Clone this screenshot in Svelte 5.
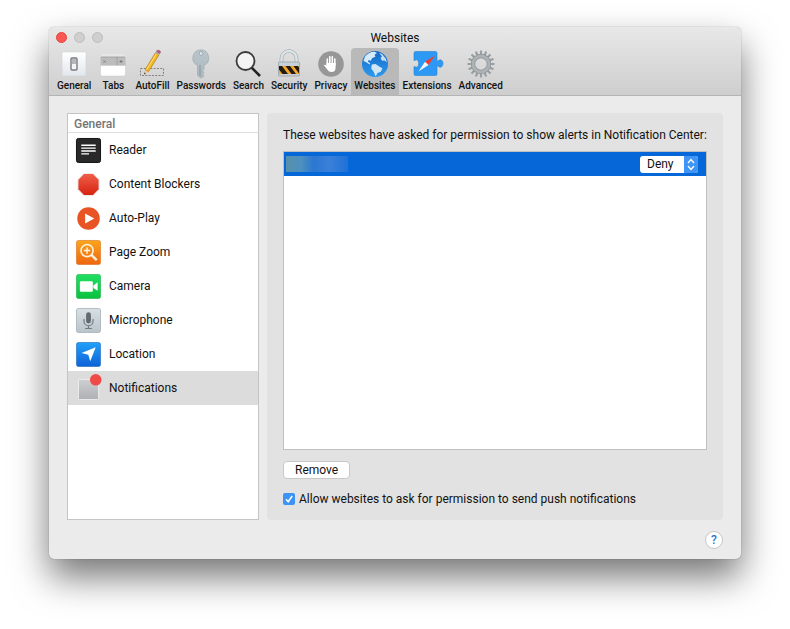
<script lang="ts">
	interface Site {
		id: number;
		permission: string;
	}

	const tabs = [
		'General',
		'Tabs',
		'AutoFill',
		'Passwords',
		'Search',
		'Security',
		'Privacy',
		'Websites',
		'Extensions',
		'Advanced'
	];

	const categories = [
		'Reader',
		'Content Blockers',
		'Auto-Play',
		'Page Zoom',
		'Camera',
		'Microphone',
		'Location',
		'Notifications'
	];

	const gearTeeth = Array.from({ length: 16 }, (_, i) => i * 22.5);

	let activeTab = $state('Websites');
	let activeCategory = $state('Notifications');
	let sites: Site[] = $state([{ id: 1, permission: 'Deny' }]);
	let selectedSite = $state(1);
	let allowPush = $state(true);

	function removeSite() {
		sites = sites.filter((site) => site.id !== selectedSite);
	}
</script>

{#snippet tabIcon(name: string)}
	<svg class="tab-icon" viewBox="0 0 30 30" aria-hidden="true">
		{#if name === 'General'}
			<rect x="3" y="3" width="24" height="24" rx="1" fill="url(#plate)" stroke="#d2d5d8" stroke-width=".6" />
			<rect x="12" y="9" width="6" height="12" rx="1" fill="#f4f4f4" stroke="#777b80" stroke-width="1.4" />
			<rect x="13" y="10" width="4" height="5" fill="#b5b8bb" />
		{:else if name === 'Tabs'}
			<rect x="3" y="5" width="24" height="22" rx="2" fill="#e6e6e6" />
			<rect x="2.5" y="8" width="25" height="9" fill="#bcbcbc" />
			<path d="M19 8v9M3 8h24" stroke="#999" stroke-width=".8" />
			<path d="M5.500 11.500l2 2M7.500 11.500l-2 2M21.500 12.500h3M23 11v3" stroke="#777" stroke-width="1" />
			<path d="M2.500 16.500h25V25q0 2-2 2h-21q-2 0-2-2z" fill="#fff" stroke="#c9c9c9" stroke-width=".5" />
		{:else if name === 'AutoFill'}
			<rect x="3.500" y="19.500" width="23" height="7" fill="none" stroke="#777" stroke-width=".9" stroke-dasharray="2 1.300" />
			<path d="M7 25.500l1.200-5 3.300 2z" fill="#eac79a" />
			<path d="M7 25.500l.5-2 1.300.8z" fill="#222" />
			<path d="M8.200 20.500L18.500 3.700l3.500 2.200-10.500 16.600z" fill="#f6b820" stroke="#a86b10" stroke-width=".6" />
			<path d="M9.500 20.800L19.600 4.500" stroke="#ffe36b" stroke-width="1" />
			<path d="M18.500 3.700l.9-1.500 3.500 2.200-.9 1.500z" fill="#aaa" />
			<path d="M19.400 2.200q1-1.700 3-.6t.5 2.800z" fill="#bd5d7c" stroke="#874158" stroke-width=".5" />
		{:else if name === 'Passwords'}
			<path
				d="M15 .8a8.200 8.200 0 0 0-3.500 15.600V26l2.500 2.700h2l2-2-1.500-1.700 1.500-1.500-1.500-1.700 1.500-1.600v-3.800A8.200 8.200 0 0 0 15 .8z"
				fill="url(#steel)"
				stroke="#98a5aa"
				stroke-width=".6"
			/>
			<circle cx="15" cy="4.500" r="1.800" fill="#e8eaeb" stroke="#7f8b90" stroke-width=".6" />
			<path d="M14 16v11" stroke="#84939a" stroke-width=".9" />
		{:else if name === 'Search'}
			<path d="M18.500 18.500l8.500 8.500" stroke="#222" stroke-width="2.600" />
			<circle cx="12.500" cy="12" r="9" fill="#f4f4f4" stroke="#3b3b3b" stroke-width="1.800" />
		{:else if name === 'Security'}
			<path d="M7.500 16V9.500a7.500 7.500 0 0 1 15 0V16" fill="none" stroke="#9ba5aa" stroke-width="3.600" />
			<path d="M7.500 16V9.500a7.500 7.500 0 0 1 15 0V16" fill="none" stroke="#dde4e7" stroke-width="2.400" />
			<rect x="4.500" y="13" width="21" height="14" rx="1" fill="#c6d2d9" stroke="#8a9296" stroke-width=".6" />
			<rect x="5" y="17" width="20" height="8" fill="#f3a62c" />
			<path d="M5 17h3l6 8H8.500L5 20.500zM11.500 17H16l6 8h-4.500zM19.500 17H24l1 1.500V24.500z" fill="#231b12" />
		{:else if name === 'Privacy'}
			<circle cx="15" cy="15" r="12.800" fill="#979797" />
			<path
				d="M11.300 16V10M13.800 14V7.800M16.300 14V7.800M18.800 16V10"
				stroke="#fff"
				stroke-width="1.600"
				stroke-linecap="round"
			/>
			<path d="M10.500 14h9.100v4.500q0 4.500-4 4.500-3 0-4.300-2.600L7.900 16.300q.7-1.500 2.600.5z" fill="#fff" />
		{:else if name === 'Websites'}
			<circle cx="15" cy="15" r="13" fill="url(#ocean)" />
			<path
				d="M5 7.500Q9 2.700 14.500 2.800l2.500 1.300-2.500 1.700 1 1.700-3.500 1.800-1.200 2.500-2.300-.8-.6 1.800 2.100 1.200-.3 1.500-3.500-2.200L3.500 12z"
				fill="#d6eafa"
			/>
			<path d="M11.800 15.500l3.700-.5 4.500 3 2.500 1.200-1.700 3.500-3.300 1.300-1.800 3.500-2-4.500-2.500-3.500z" fill="#cfe6f8" />
			<path d="M19 4l3 1 3.700 4.500 1.200 4-2.500-2-2.400.2-1.500-2.700 1.500-1.800z" fill="#c2dff6" />
		{:else if name === 'Extensions'}
			<path
				d="M4.500 2.500h20q1.500 0 1.500 1.500v8.200q1 0 1.500-.7 1.500-1.500 3.200-.2 1.300 1.200 1.300 3.200t-1.300 3.200q-1.700 1.300-3.200-.2-.5-.7-1.500-.7V25q0 1.500-1.500 1.500h-20Q3 26.500 3 25v-7.500q1 0 1.500.5 1.300.6 2.300-.4.900-1.300.9-3.100t-.9-3.100q-1-1-2.300-.4-.5.500-1.500.5V4q0-1.500 1.500-1.500z"
				fill="#2d99f4"
				stroke="#2581d0"
				stroke-width=".6"
				transform="translate(-1)"
			/>
			<path d="M23 6.500L16.500 16 13 12.800z" fill="#ef3d32" />
			<path d="M6.500 22.500L13 12.800l3.500 3.200z" fill="#f5f7fa" />
		{:else}
			{#each gearTeeth as angle}
				<rect x="13.900" y="1.500" width="2.200" height="5" rx=".5" fill="#989ea1" transform="rotate({angle} 15 15)" />
			{/each}
			<circle cx="15" cy="15" r="8" fill="none" stroke="#8b9195" stroke-width="4.400" />
			<circle cx="15" cy="15" r="8" fill="none" stroke="#adb2b5" stroke-width="3" />
		{/if}
	</svg>
{/snippet}

{#snippet categoryIcon(name: string)}
	<svg class="category-icon" viewBox="0 0 26 26" aria-hidden="true">
		{#if name === 'Reader'}
			<rect x=".5" y=".5" width="25" height="25" rx="2" fill="#292929" stroke="#111" />
			<path d="M5.500 7.500h15M5.500 10.500h15M5.500 13.500h15M5.500 16.500h8" stroke="#fff" stroke-width="1.500" />
		{:else if name === 'Content Blockers'}
			<path d="M8.300 1.500h9.400L24 8v10l-6.300 6.500H8.300L2 18V8z" fill="url(#stop)" stroke="#eee" stroke-width="1" />
		{:else if name === 'Auto-Play'}
			<circle cx="13" cy="13" r="11.700" fill="#e95425" />
			<path d="M9.500 7.800L19 13l-9.500 5.200z" fill="#fff" />
		{:else if name === 'Page Zoom'}
			<rect x=".5" y=".5" width="25" height="25" rx="2" fill="url(#amber)" stroke="#d86c13" stroke-width=".6" />
			<circle cx="11.500" cy="11" r="6.300" fill="none" stroke="#fff3df" stroke-width="1.700" />
			<path d="M11.500 7.700v6.600M8.200 11h6.600" stroke="#fff3df" stroke-width="1.500" />
			<path d="M16 15.500l5.500 5.500" stroke="#fff3df" stroke-width="2.500" />
		{:else if name === 'Camera'}
			<rect x=".5" y=".5" width="25" height="25" rx="2" fill="url(#green)" stroke="#13ad42" stroke-width=".6" />
			<rect x="4" y="7.500" width="13.500" height="11" rx="1.300" fill="#fff" />
			<path d="M18 12l4.500-3.500v9L18 14.500z" fill="#fff" />
		{:else if name === 'Microphone'}
			<rect x=".5" y=".5" width="25" height="25" rx="2" fill="url(#silver)" stroke="#a4aeb3" stroke-width=".8" />
			<rect x="10.500" y="4.500" width="5" height="11.500" rx="2.500" fill="#626a70" />
			<path d="M8.300 11.500v2.300a4.700 4.700 0 0 0 9.400 0v-2.300M13 18.500V21M9.500 21.300h7" fill="none" stroke="#70787d" stroke-width="1.200" />
		{:else if name === 'Location'}
			<rect x=".5" y=".5" width="25" height="25" rx="2" fill="url(#azure)" stroke="#1765b9" stroke-width=".6" />
			<path d="M20.500 5.500L14.800 20l-2-6.800-7-1.700z" fill="#fff" />
		{:else}
			<rect x="2.500" y="3.500" width="21" height="21" rx="1" fill="url(#grey)" stroke="#eee" />
			<circle cx="20.500" cy="4" r="6" fill="#f04a47" />
		{/if}
	</svg>
{/snippet}

<svg class="gradients" aria-hidden="true">
	<defs>
		<linearGradient id="plate" x2="0" y2="1"><stop stop-color="#fff" /><stop offset="1" stop-color="#e2e7ec" /></linearGradient>
		<linearGradient id="steel" x2="0" y2="1"><stop stop-color="#b9c7cd" /><stop offset="1" stop-color="#abb8bd" /></linearGradient>
		<linearGradient id="ocean" x2="0" y2="1"><stop stop-color="#1568c4" /><stop offset="1" stop-color="#2c9af0" /></linearGradient>
		<linearGradient id="stop" x2="0" y2="1"><stop stop-color="#f0604b" /><stop offset="1" stop-color="#d5220f" /></linearGradient>
		<linearGradient id="amber" x2="0" y2="1"><stop stop-color="#faa61b" /><stop offset="1" stop-color="#ef6511" /></linearGradient>
		<linearGradient id="green" x2="0" y2="1"><stop stop-color="#20df62" /><stop offset="1" stop-color="#0bc13e" /></linearGradient>
		<linearGradient id="silver" x2="0" y2="1"><stop stop-color="#d8e0e4" /><stop offset="1" stop-color="#b9c4ca" /></linearGradient>
		<linearGradient id="azure" x2="0" y2="1"><stop stop-color="#21a0f7" /><stop offset="1" stop-color="#0f62d8" /></linearGradient>
		<linearGradient id="grey" x2="0" y2="1"><stop stop-color="#cecfd1" /><stop offset="1" stop-color="#aeb0b4" /></linearGradient>
	</defs>
</svg>

<div class="desktop">
	<div class="window">
		<header>
			<div class="titlebar">
				<div class="traffic-lights">
					<button class="light close" aria-label="Close"></button>
					<button class="light" aria-label="Minimize" disabled></button>
					<button class="light" aria-label="Zoom" disabled></button>
				</div>
				<h1>Websites</h1>
			</div>
			<nav class="toolbar">
				{#each tabs as tab}
					<button class="tab" class:active={tab === activeTab} onclick={() => (activeTab = tab)}>
						{@render tabIcon(tab)}
						<span>{tab}</span>
					</button>
				{/each}
			</nav>
		</header>

		<main>
			<aside class="sidebar">
				<h2>General</h2>
				<ul>
					{#each categories as category}
						<li>
							<button
								class="category"
								class:selected={category === activeCategory}
								onclick={() => (activeCategory = category)}
							>
								{@render categoryIcon(category)}
								<span>{category}</span>
							</button>
						</li>
					{/each}
				</ul>
			</aside>

			<section class="panel">
				<p>These websites have asked for permission to show alerts in Notification Center:</p>
				<ul class="sites">
					{#each sites as site (site.id)}
						<li class="site" class:selected={site.id === selectedSite}>
							<span class="site-name"></span>
							<div class="popup">
								<select aria-label="Permission" bind:value={site.permission}>
									<option>Allow</option>
									<option>Deny</option>
								</select>
								<svg class="popup-arrows" viewBox="0 0 14 17" aria-hidden="true">
									<path d="M4 7l3-3.500L10 7M4 10l3 3.500 3-3.500" />
								</svg>
							</div>
						</li>
					{/each}
				</ul>
				<button class="remove" onclick={removeSite}>Remove</button>
				<label class="allow">
					<input type="checkbox" bind:checked={allowPush} />
					<svg class="tick" viewBox="0 0 12 12" aria-hidden="true">
						<path d="M3 6.200l2.200 2.600L9.200 3" />
					</svg>
					<span>Allow websites to ask for permission to send push notifications</span>
				</label>
			</section>
		</main>

		<footer>
			<button class="help" aria-label="Help">?</button>
		</footer>
	</div>
</div>

<style>
	:global(body) {
		margin: 0;
		background-color: #fff;
	}

	.gradients {
		position: absolute;
		width: 0;
		height: 0;
	}

	.desktop {
		box-sizing: border-box;
		display: flex;
		min-height: 100vh;
		padding: 27px 49px 70px;
		font-family: Roboto, 'Liberation Sans', sans-serif;
		font-size: 12px;
		line-height: 16px;
		color: #111;
	}

	button,
	select {
		font: inherit;
		color: inherit;
	}

	ul {
		list-style: none;
		margin: 0;
		padding: 0;
	}

	.window {
		display: flex;
		flex-direction: column;
		flex: 1;
		min-width: 0;
		background-color: #ebebeb;
		border-radius: 5px;
		box-shadow:
			0 0 1px rgba(0, 0, 0, 0.5),
			0 18px 36px rgba(0, 0, 0, 0.54);
	}

	header {
		background: linear-gradient(#e8e8e8, #cecece);
		border-bottom: 1px solid #b4b4b4;
		border-radius: 5px 5px 0 0;
	}

	.titlebar {
		display: grid;
		grid-template-columns: 1fr auto 1fr;
		align-items: center;
		height: 21px;
		padding: 0 7px;
	}

	.traffic-lights {
		display: flex;
		gap: 7px;
	}

	.light {
		box-sizing: border-box;
		width: 11px;
		height: 11px;
		padding: 0;
		border: 1px solid #bdbdbd;
		border-radius: 50%;
		background-color: #cfcfcf;
	}

	.light.close {
		border-color: #e2463f;
		background-color: #fc5753;
	}

	h1 {
		margin: 0;
		font-size: 12px;
		font-weight: 400;
	}

	.toolbar {
		display: flex;
		gap: 1px;
		padding: 0 5px;
	}

	.tab {
		display: flex;
		flex-direction: column;
		align-items: center;
		min-width: 36px;
		height: 47px;
		padding: 1px 3px;
		border: none;
		border-radius: 4px 4px 0 0;
		background: none;
		font-size: 10px;
		font-weight: 500;
		line-height: 14px;
	}

	.tab.active {
		background-color: #b9b9b9;
	}

	.tab-icon {
		width: 30px;
		height: 30px;
		overflow: visible;
	}

	main {
		display: flex;
		flex: 1;
		gap: 8px;
		padding: 17px 18px 0;
	}

	.sidebar {
		box-sizing: border-box;
		flex: 0 0 192px;
		border: 1px solid #c4c4c4;
		background-color: #fff;
	}

	h2 {
		margin: 0;
		padding: 2px 6px 0;
		border-bottom: 1px solid #dedede;
		font-size: 12px;
		font-weight: 500;
		line-height: 16px;
		color: #757575;
	}

	.category {
		display: flex;
		align-items: center;
		gap: 8px;
		width: 100%;
		height: 34px;
		padding: 0 8px;
		border: none;
		background: none;
		text-align: left;
	}

	.category.selected {
		background-color: #dcdcdc;
	}

	.category-icon {
		width: 25px;
		height: 25px;
		overflow: visible;
	}

	.panel {
		display: flex;
		flex-direction: column;
		align-items: flex-start;
		flex: 1;
		min-width: 0;
		padding: 14px 16px 13px;
		border-radius: 4px;
		background-color: #e2e2e2;
	}

	p {
		margin: 0 0 8px;
	}

	.sites {
		box-sizing: border-box;
		flex: 1;
		width: 100%;
		border: 1px solid #bfbfbf;
		background-color: #fff;
	}

	.site {
		display: flex;
		align-items: center;
		justify-content: space-between;
		height: 24px;
		padding: 0 8px 0 2px;
	}

	.site.selected {
		background-color: #0567d8;
	}

	.site-name {
		width: 62px;
		height: 16px;
		background: linear-gradient(90deg, #5790a8, #4d8fc0 25%, #2a77d2 45%, #3a80d8 70%, #1f71d8);
	}

	.popup {
		position: relative;
		display: flex;
	}

	select {
		appearance: none;
		width: 58px;
		height: 17px;
		padding: 0 0 0 7px;
		border: none;
		border-radius: 3px;
		background-color: #fff;
		line-height: 17px;
	}

	.popup-arrows {
		position: absolute;
		top: 0;
		right: 0;
		width: 14px;
		height: 17px;
		border-radius: 0 3px 3px 0;
		background-color: #3f95f5;
		pointer-events: none;
	}

	.popup-arrows path {
		fill: none;
		stroke: #fff;
		stroke-width: 1.3;
	}

	.remove {
		height: 18px;
		margin-top: 11px;
		padding: 0 11px;
		border: 1px solid #c8c8c8;
		border-radius: 4px;
		background-color: #fff;
		line-height: 16px;
	}

	.allow {
		position: relative;
		display: flex;
		align-items: center;
		gap: 4px;
		margin-top: 12px;
	}

	input {
		appearance: none;
		width: 12px;
		height: 12px;
		margin: 0;
		border-radius: 2px;
		background-color: #fff;
	}

	input:checked {
		background-color: #3b93f5;
	}

	.tick {
		position: absolute;
		left: 0;
		width: 12px;
		height: 12px;
		pointer-events: none;
	}

	.tick path {
		fill: none;
		stroke: #fff;
		stroke-width: 1.5;
	}

	footer {
		display: flex;
		justify-content: flex-end;
		padding: 11px 18px 10px;
	}

	.help {
		width: 18px;
		height: 18px;
		padding: 0;
		border: 1px solid #c6c6c6;
		border-radius: 50%;
		background-color: #fff;
		font-weight: 500;
		line-height: 16px;
		color: #2a78d0;
	}
</style>
